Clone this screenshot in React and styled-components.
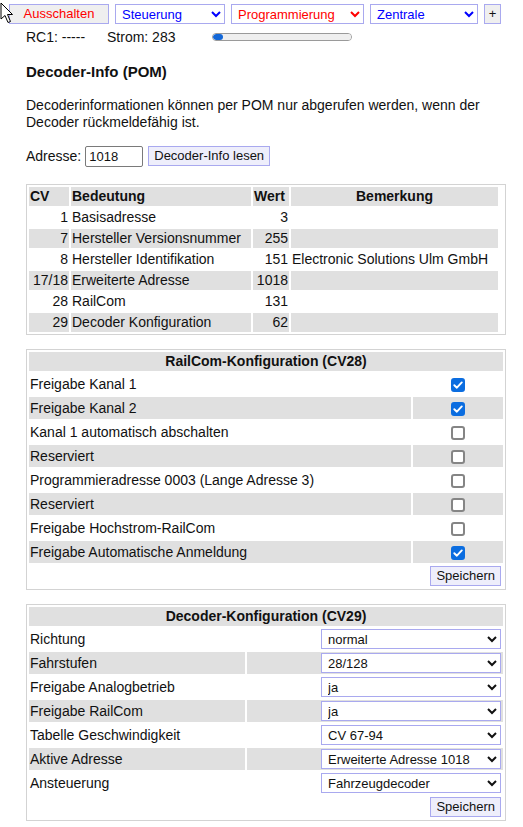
import React from 'react'
import styled, { createGlobalStyle } from 'styled-components'

const GlobalStyle = createGlobalStyle`
  body {
    margin: 0;
    font-family: "Liberation Sans", Arial, sans-serif;
    font-size: 14px;
    color: #111;
    background: #fff;
  }
`

const Page = styled.div`
  position: relative;
  padding-top: 4px;
  padding-bottom: 8px;
`

const Cursor = styled.svg`
  position: absolute;
  left: 0;
  top: 2px;
  pointer-events: none;
`

const Toolbar = styled.div`
  display: flex;
  align-items: center;
  gap: 6px;
  padding-left: 9px;
  height: 20px;
`

const Button = styled.button`
  box-sizing: border-box;
  height: 20px;
  width: ${(p) => (p.$w ? `${p.$w}px` : 'auto')};
  padding: ${(p) => (p.$square ? '0' : '0 5px')};
  border: 1px solid #a9a9ef;
  border-radius: 0;
  background: ${(p) => (p.$tint ? '#eeeefb' : '#efefef')};
  color: ${(p) => p.$color || '#111'};
  font-family: "Liberation Sans", Arial, sans-serif;
  font-size: 13px;
  line-height: 18px;
`

const Select = styled.select`
  box-sizing: border-box;
  height: 20px;
  width: ${(p) => p.$w}px;
  padding: 0 2px;
  border: 1px solid #a9a9ef;
  border-radius: 0;
  background: #fff;
  color: ${(p) => p.$color || '#111'};
  font-family: "Liberation Sans", Arial, sans-serif;
  font-size: 13px;
  outline: none;
`

const StatusRow = styled.div`
  display: flex;
  align-items: center;
  margin-top: 4px;
  padding-left: 26px;
  height: 18px;
  line-height: 18px;
`

const StatusItem = styled.span`
  width: ${(p) => p.$w}px;
`

const Meter = styled.progress`
  appearance: none;
  -webkit-appearance: none;
  box-sizing: border-box;
  width: 140px;
  height: 8px;
  border: 1px solid #9a9a9a;
  border-radius: 4px;
  overflow: hidden;
  background: #efefef;
  &::-webkit-progress-bar {
    background: #efefef;
  }
  &::-webkit-progress-value {
    background: #1468d8;
    border-radius: 3px;
  }
`

const Heading = styled.h2`
  margin: 17px 0 0 26px;
  font-size: 15px;
  line-height: 18px;
  font-weight: bold;
`

const Text = styled.p`
  margin: 16px 0 0 26px;
  width: 470px;
  line-height: 17px;
`

const AddressRow = styled.div`
  display: flex;
  align-items: center;
  gap: 4px;
  margin-top: 15px;
  padding-left: 26px;
  height: 20px;
`

const AddressInput = styled.input`
  box-sizing: border-box;
  width: 58px;
  height: 21px;
  padding: 0 3px;
  border: 1px solid #7a7a7a;
  border-radius: 2px;
  font-family: "Liberation Sans", Arial, sans-serif;
  font-size: 13px;
  color: #111;
  margin-right: 1px;
`

const Panel = styled.div`
  box-sizing: border-box;
  width: 480px;
  margin: ${(p) => p.$top}px 0 0 26px;
  border: 1px solid #d3d3d3;
`

const Table = styled.table`
  border-collapse: separate;
  border-spacing: 2px;
  table-layout: fixed;
  width: ${(p) => (p.$w ? `${p.$w}px` : '100%')};
`

const Col = styled.col`
  width: ${(p) => (p.$w ? `${p.$w}px` : 'auto')};
`

const Th = styled.th`
  background: #e0e0e0;
  padding: 1px;
  height: 17px;
  line-height: 17px;
  font-weight: bold;
  text-align: ${(p) => p.$align || 'left'};
`

const Td = styled.td`
  background: ${(p) => (p.$shade ? '#e0e0e0' : 'transparent')};
  padding: ${(p) => (p.$tall ? '0 1px' : '1px')};
  height: ${(p) => (p.$tall ? '22px' : '17px')};
  line-height: 17px;
  text-align: ${(p) => p.$align || 'left'};
  vertical-align: middle;
  white-space: nowrap;
`

const CheckWrap = styled.label`
  position: relative;
  display: inline-block;
  width: 14px;
  height: 14px;
  vertical-align: middle;
  svg {
    position: absolute;
    left: 0;
    top: 0;
    pointer-events: none;
  }
`

const CheckInput = styled.input`
  appearance: none;
  -webkit-appearance: none;
  box-sizing: border-box;
  display: block;
  margin: 0;
  width: 14px;
  height: 14px;
  border: 2px solid #858585;
  border-radius: 3px;
  background: #fff;
  &:checked {
    background: #0b6de0;
    border-color: #0b6de0;
  }
`

const RightCell = styled.div`
  display: flex;
  justify-content: flex-end;
  padding-right: 1px;
`

function Checkbox({ checked }) {
  return (
    <CheckWrap>
      <CheckInput type="checkbox" defaultChecked={checked} />
      {checked && (
        <svg width="14" height="14" viewBox="0 0 14 14">
          <path d="M3.3 7.2 L5.9 9.7 L10.8 4.4" fill="none" stroke="#fff" strokeWidth="1.9" strokeLinecap="round" strokeLinejoin="round" />
        </svg>
      )}
    </CheckWrap>
  )
}

const cvRows = [
  ['1', 'Basisadresse', '3', ''],
  ['7', 'Hersteller Versionsnummer', '255', ''],
  ['8', 'Hersteller Identifikation', '151', 'Electronic Solutions Ulm GmbH'],
  ['17/18', 'Erweiterte Adresse', '1018', ''],
  ['28', 'RailCom', '131', ''],
  ['29', 'Decoder Konfiguration', '62', ''],
]

const railcomRows = [
  ['Freigabe Kanal 1', true],
  ['Freigabe Kanal 2', true],
  ['Kanal 1 automatisch abschalten', false],
  ['Reserviert', false],
  ['Programmieradresse 0003 (Lange Adresse 3)', false],
  ['Reserviert', false],
  ['Freigabe Hochstrom-RailCom', false],
  ['Freigabe Automatische Anmeldung', true],
]

const configRows = [
  ['Richtung', 'normal'],
  ['Fahrstufen', '28/128'],
  ['Freigabe Analogbetrieb', 'ja'],
  ['Freigabe RailCom', 'ja'],
  ['Tabelle Geschwindigkeit', 'CV 67-94'],
  ['Aktive Adresse', 'Erweiterte Adresse 1018'],
  ['Ansteuerung', 'Fahrzeugdecoder'],
]

export default function App() {
  return (
    <Page>
      <GlobalStyle />
      <Toolbar>
        <Button $w={100} $color="#ff0000">Ausschalten</Button>
        <Select $w={110} $color="#0000ff" defaultValue="s">
          <option value="s">Steuerung</option>
        </Select>
        <Select $w={133} $color="#ff0000" defaultValue="p">
          <option value="p">Programmierung</option>
        </Select>
        <Select $w={108} $color="#0000ff" defaultValue="z">
          <option value="z">Zentrale</option>
        </Select>
        <Button $w={17} $square>+</Button>
      </Toolbar>

      <StatusRow>
        <StatusItem $w={81}>RC1: -----</StatusItem>
        <StatusItem $w={105}>Strom: 283</StatusItem>
        <Meter value={283} max={4000} />
      </StatusRow>

      <Heading>Decoder-Info (POM)</Heading>
      <Text>
        Decoderinformationen können per POM nur abgerufen werden, wenn der
        Decoder rückmeldefähig ist.
      </Text>

      <AddressRow>
        <span>Adresse:</span>
        <AddressInput defaultValue="1018" />
        <Button $tint>Decoder-Info lesen</Button>
      </AddressRow>

      <Panel $top={18}>
        <Table $w={473}>
          <colgroup>
            <Col $w={40} />
            <Col $w={180} />
            <Col $w={36} />
            <Col />
          </colgroup>
          <thead>
            <tr>
              <Th>CV</Th>
              <Th>Bedeutung</Th>
              <Th>Wert</Th>
              <Th $align="center">Bemerkung</Th>
            </tr>
          </thead>
          <tbody>
            {cvRows.map(([cv, name, val, note], i) => (
              <tr key={cv}>
                <Td $shade={i % 2 === 1} $align="right">{cv}</Td>
                <Td $shade={i % 2 === 1}>{name}</Td>
                <Td $shade={i % 2 === 1} $align="right">{val}</Td>
                <Td $shade={i % 2 === 1}>{note}</Td>
              </tr>
            ))}
          </tbody>
        </Table>
      </Panel>

      <Panel $top={14}>
        <Table>
          <colgroup>
            <Col $w={382} />
            <Col />
          </colgroup>
          <thead>
            <tr>
              <Th colSpan={2} $align="center">RailCom-Konfiguration (CV28)</Th>
            </tr>
          </thead>
          <tbody>
            {railcomRows.map(([label, on], i) => (
              <tr key={i}>
                <Td $tall $shade={i % 2 === 1}>{label}</Td>
                <Td $tall $shade={i % 2 === 1} $align="center">
                  <Checkbox checked={on} />
                </Td>
              </tr>
            ))}
            <tr>
              <Td $tall colSpan={2}>
                <RightCell>
                  <Button $tint>Speichern</Button>
                </RightCell>
              </Td>
            </tr>
          </tbody>
        </Table>
      </Panel>

      <Panel $top={14}>
        <Table>
          <colgroup>
            <Col $w={216} />
            <Col />
          </colgroup>
          <thead>
            <tr>
              <Th colSpan={2} $align="center">Decoder-Konfiguration (CV29)</Th>
            </tr>
          </thead>
          <tbody>
            {configRows.map(([label, value], i) => (
              <tr key={label}>
                <Td $tall $shade={i % 2 === 1}>{label}</Td>
                <Td $tall $shade={i % 2 === 1}>
                  <RightCell>
                    <Select $w={180} defaultValue={value}>
                      <option value={value}>{value}</option>
                    </Select>
                  </RightCell>
                </Td>
              </tr>
            ))}
            <tr>
              <Td $tall colSpan={2}>
                <RightCell>
                  <Button $tint>Speichern</Button>
                </RightCell>
              </Td>
            </tr>
          </tbody>
        </Table>
      </Panel>

      <Cursor width="14" height="22" viewBox="0 0 14 22">
        <path d="M1 1 L1 17 L5 13.5 L8 20.5 L10.5 19.5 L7.5 12.5 L12.5 12.5 Z" fill="#fff" stroke="#000" strokeWidth="1" strokeLinejoin="round" />
      </Cursor>
    </Page>
  )
}
